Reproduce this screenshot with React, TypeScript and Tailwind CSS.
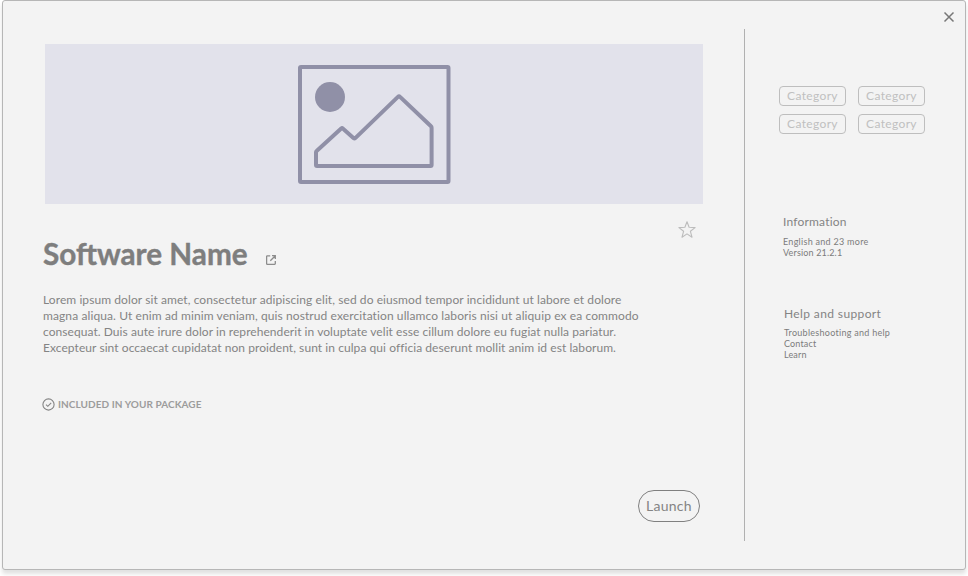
import React from "react";

const categories = ["Category", "Category", "Category", "Category"];

function Placeholder() {
  return (
    <svg width="154" height="120" viewBox="297 64 154 120" fill="none" stroke="#9090a7" strokeWidth="4" strokeLinejoin="round">
      <rect x="300" y="67" width="148.5" height="115" rx="1" />
      <circle cx="330" cy="97" r="15" fill="#9090a7" stroke="none" />
      <path d="M316 165V152.3Q316 151.5 316.6 151L341.2 128.6Q342 127.8 342.8 128.5L353.7 138.2Q354.5 138.8 355.3 138.1L398.2 96.6Q399 95.8 399.8 96.6L431 126.3Q431.6 126.8 431.6 127.7V165Q431.6 166 430.6 166H317Q316 166 316 165Z" />
    </svg>
  );
}

export default function App() {
  return (
    <div className="h-[576px] w-[968px] overflow-hidden bg-white pl-[2px] font-['Lato','Nunito_Sans',sans-serif] text-[#848484]">
      <div className="flex h-[570px] w-[964px] rounded-[3px] border border-[#b6b6b6] bg-[#f3f3f3] shadow-[0_4px_4px_rgba(0,0,0,0.12)]">
        <main className="flex w-[741px] shrink-0 flex-col pl-[40px] pt-[43px]">
          <div className="ml-[2px] flex h-[160px] w-[658px] justify-center bg-[#e2e2eb] pt-[20px]">
            <Placeholder />
          </div>
          <div className="flex h-[34px] w-[653px] items-end justify-end">
            <svg className="-mb-px" width="18" height="18" viewBox="0 0 18 18" fill="none" stroke="#bcbcbc" strokeWidth="1.1" strokeLinejoin="round">
              <path d="M9 .8L11.1 6.3L17.1 6.6L12.4 10.3L14 16.2L9 12.9L4 16.2L5.6 10.3L.9 6.6L6.9 6.3Z" />
            </svg>
          </div>
          <div className="flex h-[34px] items-center">
            <h1 className="-mt-[2px] w-[223px] whitespace-nowrap text-[29.7px] font-bold leading-[34px] text-[#7e7e7e] [-webkit-text-stroke:0.4px_#7e7e7e]">Software Name</h1>
            <svg className="mt-[10px]" width="10" height="10" viewBox="0 0 10 10" fill="none" stroke="#8c8c8c" strokeWidth="1.3">
              <path d="M4.2 .8H1.3Q.6.8.6 1.5V8.6Q.6 9.3 1.3 9.3H8.6Q9.3 9.3 9.3 8.6V6M6 .7H9.3V4M9.3.7L4.3 5.7" />
            </svg>
          </div>
          <div className="mt-[20px] whitespace-nowrap text-[12px] leading-[16px]">
            <p className="tracking-[0.08px]">Lorem ipsum dolor sit amet, consectetur adipiscing elit, sed do eiusmod tempor incididunt ut labore et dolore</p>
            <p className="tracking-[0.1px]">magna aliqua. Ut enim ad minim veniam, quis nostrud exercitation ullamco laboris nisi ut aliquip ex ea commodo</p>
            <p className="tracking-[0.055px]">consequat. Duis aute irure dolor in reprehenderit in voluptate velit esse cillum dolore eu fugiat nulla pariatur.</p>
            <p className="tracking-[0.065px]">Excepteur sint occaecat cupidatat non proident, sunt in culpa qui officia deserunt mollit anim id est laborum.</p>
          </div>
          <div className="mt-[41px] flex h-[14px] items-center gap-[3px] whitespace-nowrap text-[10px] font-bold leading-[14px] tracking-[0.07px] text-[#9c9c9c]">
            <svg className="-ml-[1px]" width="13" height="13" viewBox="0 0 13 13" fill="none" stroke="#848484" strokeWidth="1.1">
              <circle cx="6.5" cy="6.5" r="5.6" />
              <path d="M4 6.6L5.8 8.3L9.2 4.8" />
            </svg>
            <span>INCLUDED IN YOUR PACKAGE</span>
          </div>
          <button className="ml-[595px] mt-[79px] flex h-[32px] w-[62px] items-center justify-center rounded-full border border-[#808080] text-[14px] leading-[20px] tracking-[0.25px]">
            <span>Launch</span>
          </button>
        </main>
        <aside className="mt-[28px] flex h-[512px] w-[221px] flex-col border-l border-[#b0b0b0] pl-[34px]">
          <div className="mt-[57px] grid grid-cols-[67px_67px] gap-x-[12px] gap-y-[8px]">
            {categories.map((label, i) => (
              <span key={i} className="flex h-[20px] items-center justify-center rounded-[4px] border border-[#bebebe] text-[12px] leading-[16px] tracking-[0.35px] text-[#c0c0c0]">{label}</span>
            ))}
          </div>
          <section className="ml-[4px] mt-[80px] whitespace-nowrap">
            <h2 className="text-[12px] leading-[16px] tracking-[0.2px]">Information</h2>
            <div className="mt-[6px] text-[9px] leading-[11px] text-[#7c7c7c]">
              <p className="tracking-[0.28px]">English and 23 more</p>
              <p className="tracking-[0.16px]">Version 21.2.1</p>
            </div>
          </section>
          <section className="ml-[5px] mt-[48px] whitespace-nowrap">
            <h2 className="text-[12px] leading-[16px] tracking-[0.38px]">Help and support</h2>
            <div className="mt-[5px] text-[9px] leading-[11px] text-[#7c7c7c]">
              <p className="tracking-[0.27px]">Troubleshooting and help</p>
              <p className="tracking-[0.15px]">Contact</p>
              <p className="tracking-[0.15px]">Learn</p>
            </div>
          </section>
        </aside>
        <button className="-ml-[22px] mt-[10px] h-[12px] w-[12px] shrink-0" aria-label="Close">
          <svg width="12" height="12" viewBox="0 0 12 12" fill="none" stroke="#777" strokeWidth="1.5">
            <path d="M1.5 1.5L10.5 10.5M10.5 1.5L1.5 10.5" />
          </svg>
        </button>
      </div>
    </div>
  );
}
